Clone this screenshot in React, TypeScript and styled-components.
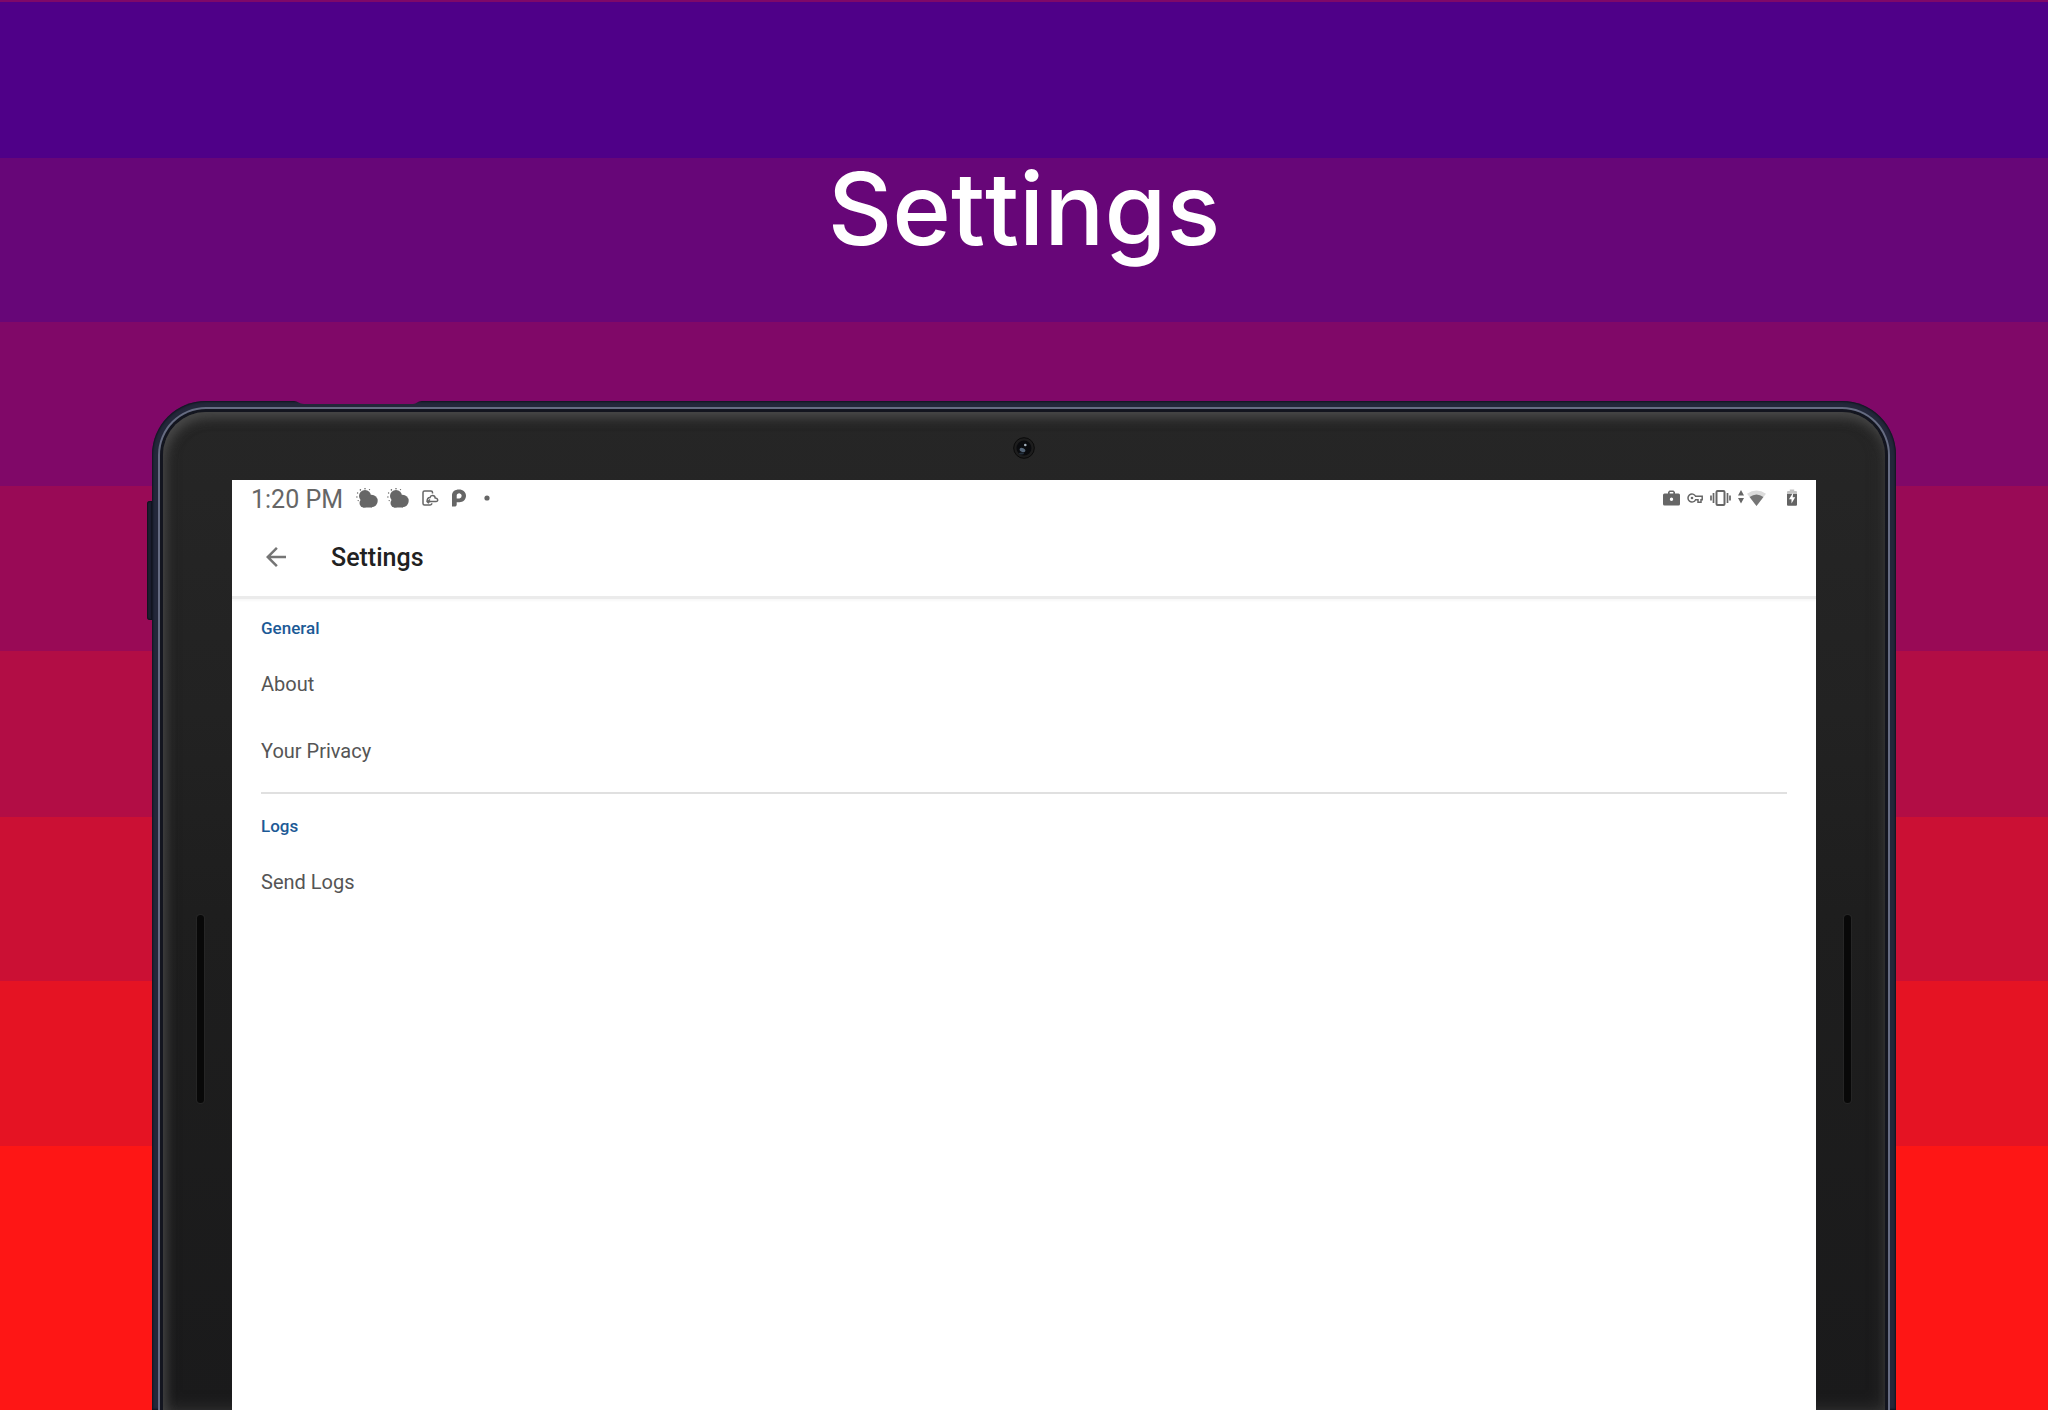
import React from "react";
import styled, { createGlobalStyle } from "styled-components";

const GlobalStyle = createGlobalStyle`
  *, *::before, *::after { box-sizing: border-box; }
  body { margin: 0; }
`;

const Page = styled.div`
  min-height: 100vh;
  display: flex;
  flex-direction: column;
  overflow: hidden;
  font-family: Roboto, "Liberation Sans", sans-serif;
  background: linear-gradient(
    #800868 2px,
    #4f0088 2px 158px,
    #670678 158px 322px,
    #800868 322px 486px,
    #990a56 486px 651px,
    #b20d45 651px 817px,
    #cb1034 817px 981px,
    #e51323 981px 1146px,
    #fe1615 1146px
  );
`;

const Title = styled.h1`
  margin: 0;
  padding: 149px 24px 132px;
  font-family: Inter, "Liberation Sans", sans-serif;
  font-size: 100px;
  line-height: 120px;
  font-weight: 500;
  font-kerning: none;
  text-align: center;
  color: #fff;
`;

const Tablet = styled.section`
  position: relative;
  flex: 1;
  display: flex;
  margin: 0 152px;
  padding: 6px 6px 0;
  border-radius: 54px 54px 0 0;
  background: #23273a;
  box-shadow: inset 0 0 2px 1px #10131f;
`;

const Rim = styled.div`
  flex: 1;
  display: flex;
  padding: 2px 2px 0;
  border-radius: 48px 48px 0 0;
  background: #666c82;
`;

const Groove = styled.div`
  flex: 1;
  display: flex;
  padding: 3px 3px 0;
  border-radius: 46px 46px 0 0;
  background: #13151f;
`;

const Bezel = styled.div`
  flex: 1;
  display: grid;
  grid-template-columns: 69px 1fr 69px;
  grid-template-rows: 68px 1fr;
  border-radius: 43px 43px 0 0;
  background: linear-gradient(#262626, #222 300px, #1e1e1e 500px, #1a1a1b);
  box-shadow: inset 3px 7px 12px -2px #4a4a4a, inset 0 0 16px 1px #333;
`;

const CameraStrip = styled.div`
  grid-column: 1 / -1;
  display: flex;
  justify-content: center;
  padding-top: 25px;
`;

const SpeakerBay = styled.div<{ $side: "left" | "right" }>`
  display: flex;
  justify-content: ${(p) => (p.$side === "left" ? "flex-end" : "flex-start")};
  padding: 435px 28px 0;
`;

const Speaker = styled.div`
  width: 7px;
  height: 188px;
  border-radius: 4px;
  background: #080808;
  box-shadow: 0 0 1px 1px #272727;
`;

const SideButton = styled.div`
  position: absolute;
  left: -5px;
  top: 100px;
  width: 5px;
  height: 119px;
  border-radius: 3px 0 0 3px;
  background: #1c2030;
  box-shadow: inset 0 0 1px 1px #11131e;
`;

const Notch = styled.svg`
  position: absolute;
  left: 142px;
  top: 0;
`;

const Screen = styled.main`
  background: #fff;
  min-width: 0;
  overflow: hidden;
`;

const StatusBar = styled.div`
  display: flex;
  align-items: center;
  justify-content: space-between;
  height: 38px;
  padding: 0 19px 2px;
  color: #666;
`;

const StatusGroup = styled.div<{ $gap: number }>`
  display: flex;
  align-items: center;
  gap: ${(p) => p.$gap}px;
  svg { display: block; }
`;

const Clock = styled.time`
  padding-top: 4px;
  margin-right: 4px;
  font-size: 25px;
  line-height: 30px;
`;

const AppBar = styled.header`
  display: flex;
  align-items: center;
  gap: 40px;
  height: 78px;
  padding: 0 29px;
  box-shadow: 0 3px 0 #ebebeb, 0 5px 2px #f8f8f8;
`;

const BackButton = styled.button`
  display: flex;
  padding: 0;
  border: 0;
  background: none;
  color: #757575;
  cursor: pointer;
`;

const AppTitle = styled.h2`
  margin: 0;
  padding-top: 2px;
  font-size: 25px;
  line-height: 30px;
  font-weight: 500;
  color: #212121;
`;

const Group = styled.section`
  margin: 0 29px;
  padding: 10px 0 8px;
  & + & { border-top: 2px solid #e0e0e0; }
`;

const GroupTitle = styled.h3`
  margin: 0;
  font-size: 17px;
  line-height: 44px;
  font-weight: 500;
  color: #1c5a96;
`;

const Row = styled.button`
  display: block;
  width: 100%;
  padding: 2px 0 0;
  border: 0;
  background: none;
  font-family: inherit;
  font-size: 20px;
  line-height: 65px;
  text-align: left;
  color: #555;
  cursor: pointer;
`;

const WeatherIcon = () => (
  <svg width="22" height="20" viewBox="0 0 22 20" fill="currentColor">
    <circle cx="9" cy="8" r="6" />
    <circle cx="15.500" cy="13" r="6.200" />
    <circle cx="8" cy="15" r="4.500" />
    <rect x="7" y="13" width="9" height="6.500" />
    <g>
      <circle cx="9" cy="0.800" r="0.800" />
      <circle cx="13.500" cy="1.600" r="0.700" />
      <circle cx="4.400" cy="1.900" r="0.800" />
      <circle cx="1.600" cy="5" r="0.700" />
      <circle cx="0.900" cy="9" r="0.700" />
      <circle cx="2.200" cy="12.600" r="0.700" />
    </g>
  </svg>
);

const PhoneCloudIcon = () => (
  <svg width="17" height="17" viewBox="0 0 17 17" fill="none" stroke="currentColor" strokeWidth="1.500">
    <path d="M10.500 3.500V2.500A1.500 1.500 0 0 0 9 1H2.500A1.500 1.500 0 0 0 1 2.500v11A1.500 1.500 0 0 0 2.500 15H8a1.800 1.800 0 0 0 1.800-1.800" />
    <path d="M5 12c0-3 1-4.500 3-4.500C8.500 5 12.800 4.700 13.200 8c3.200.3 3.200 3.400.8 3.400H8.500c-1.800 0-2 .8-2.500 2M5 12.500l3-3" />
  </svg>
);

const ParkingIcon = () => (
  <svg width="14" height="18" viewBox="0 0 14 18" fill="currentColor">
    <path fillRule="evenodd" d="M0 17.500V6.500C0 2.500 3 .5 7 .5s7 2.500 7 6.300-3 6.400-6.500 6.400H4.700v3.100L3.500 17.500zM4.700 9.500H7.500A2.700 2.700 0 0 0 7.500 4.200C5.500 4.200 4.700 5.300 4.700 6.800z" />
  </svg>
);

const DotIcon = () => (
  <svg width="16" height="6" viewBox="0 0 16 6" fill="currentColor">
    <circle cx="8" cy="3" r="2.600" />
  </svg>
);

const WorkIcon = () => (
  <svg width="17" height="16" viewBox="0 0 17 16" fill="currentColor">
    <path fillRule="evenodd" d="M5 3.500V2L6.500.5h4L12 2v1.500h3.500A1.500 1.500 0 0 1 17 5v9a1.500 1.500 0 0 1-1.500 1.500h-14A1.500 1.500 0 0 1 0 14V5a1.500 1.500 0 0 1 1.500-1.500zm1.700 0h3.600V2H6.700zM8.500 7.500a1.700 1.700 0 1 0 0 3.400 1.700 1.700 0 0 0 0-3.400z" />
  </svg>
);

const KeyIcon = () => (
  <svg width="16" height="10" viewBox="0 0 16 10" fill="none" stroke="currentColor" strokeWidth="1.500">
    <path d="M8.600 3.300A4 4 0 1 0 8.600 6.700H11v2.500h3V6.700h1.200V3.300z" />
    <circle cx="5" cy="5" r="1.300" fill="currentColor" stroke="none" />
  </svg>
);

const VibrateIcon = () => (
  <svg width="21" height="16" viewBox="0 0 21 16" fill="none" stroke="currentColor" strokeWidth="2">
    <rect x="6.500" y="1" width="8" height="14" rx="1" />
    <path d="M3.500 3v10M17.500 3v10M1 5.500v5M20 5.500v5" strokeWidth="1.700" />
  </svg>
);

const DataIcon = () => (
  <svg width="6" height="16" viewBox="0 0 6 16" fill="currentColor">
    <path d="M3 0l3 5.500H0zM0 8h6l-3 5.500z" />
  </svg>
);

const WifiIcon = () => (
  <svg width="19" height="16" viewBox="0 0 19 16">
    <path d="M9.500 16L0 3.800Q9.500-2.600 19 3.800z" fill="#dcdcdc" />
    <path d="M9.500 16L2.600 7Q9.500 1.800 16.400 7z" fill="#757575" />
  </svg>
);

const BatteryIcon = () => (
  <svg width="10" height="18" viewBox="0 0 10 18">
    <path d="M0 5V3a1 1 0 0 1 1-1h1.800V.5h4.400V2H9a1 1 0 0 1 1 1v2z" fill="#c4c4c4" />
    <path d="M0 5h10v10.700a1 1 0 0 1-1 1H1a1 1 0 0 1-1-1z" fill="#636363" />
    <path d="M6.200 3.500L2 10.300h2.500v4.200L8.200 8.300H5.700z" fill="#fff" />
  </svg>
);

const BackIcon = () => (
  <svg width="30" height="30" viewBox="0 0 24 24" fill="currentColor">
    <path d="M20 11H7.830l5.590-5.590L12 4l-8 8 8 8 1.410-1.410L7.830 13H20v-2z" />
  </svg>
);

const Camera = () => (
  <svg width="22" height="22" viewBox="0 0 22 22">
    <circle cx="11" cy="11" r="10.300" fill="#1d1d1d" stroke="#0b0b0b" />
    <circle cx="11" cy="11" r="7.500" fill="#0a0b0e" />
    <ellipse cx="9.500" cy="13" rx="3" ry="2" fill="#536477" transform="rotate(25 9.500 13)" />
    <ellipse cx="8.500" cy="16.500" rx="2.500" ry="1" fill="#24303c" />
    <circle cx="12.300" cy="8" r="1.300" fill="#a5b2bd" />
  </svg>
);

const groups = [
  { title: "General", rows: ["About", "Your Privacy"] },
  { title: "Logs", rows: ["Send Logs"] },
];

export default function App() {
  return (
    <>
      <GlobalStyle />
      <Page>
        <Title>Settings</Title>
        <Tablet>
          <SideButton />
          <Notch width="128" height="3" viewBox="0 0 128 3">
            <path d="M0 0h128c-5 0-5 3-9 3H10C5 3 4 0 0 0z" fill="#800868" />
          </Notch>
          <Rim>
            <Groove>
              <Bezel>
                <CameraStrip>
                  <Camera />
                </CameraStrip>
                <SpeakerBay $side="left">
                  <Speaker />
                </SpeakerBay>
                <Screen>
                  <StatusBar>
                    <StatusGroup $gap={13}>
                      <StatusGroup $gap={9}>
                        <Clock>1:20 PM</Clock>
                        <WeatherIcon />
                        <WeatherIcon />
                      </StatusGroup>
                      <PhoneCloudIcon />
                      <ParkingIcon />
                      <DotIcon />
                    </StatusGroup>
                    <StatusGroup $gap={21}>
                      <StatusGroup $gap={7}>
                        <WorkIcon />
                        <KeyIcon />
                        <VibrateIcon />
                        <StatusGroup $gap={3}>
                          <DataIcon />
                          <WifiIcon />
                        </StatusGroup>
                      </StatusGroup>
                      <BatteryIcon />
                    </StatusGroup>
                  </StatusBar>
                  <AppBar>
                    <BackButton aria-label="Back">
                      <BackIcon />
                    </BackButton>
                    <AppTitle>Settings</AppTitle>
                  </AppBar>
                  {groups.map((group) => (
                    <Group key={group.title}>
                      <GroupTitle>{group.title}</GroupTitle>
                      {group.rows.map((row) => (
                        <Row key={row}>{row}</Row>
                      ))}
                    </Group>
                  ))}
                </Screen>
                <SpeakerBay $side="right">
                  <Speaker />
                </SpeakerBay>
              </Bezel>
            </Groove>
          </Rim>
        </Tablet>
      </Page>
    </>
  );
}
